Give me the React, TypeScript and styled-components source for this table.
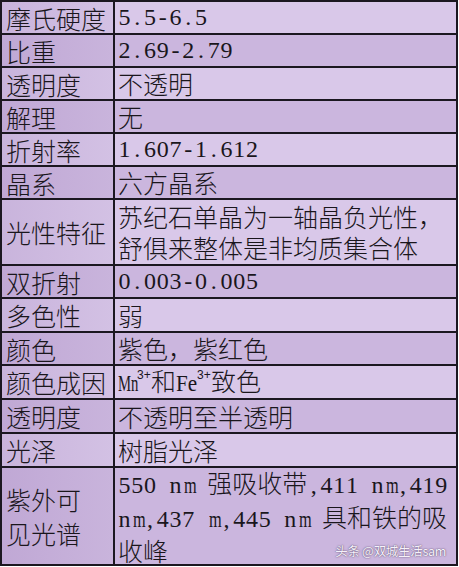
import React from "react";
import styled, { createGlobalStyle } from "styled-components";

const Global = createGlobalStyle`
  html, body { margin: 0; padding: 0; background: #ffffff; }
  body { font-family: "Noto Sans CJK SC", "Noto Sans", sans-serif; }
`;

const Table = styled.div`
  position: relative;
  width: 458px;
  box-sizing: border-box;
  display: grid;
  grid-template-columns: 111px 1fr;
  grid-template-rows: 31px 31px 31px 31px 31px 31px 64px 31px 32px 31px 32px 32px 32px 96px;
  gap: 2px;
  padding: 2px;
  background: #1b1720;
  color: #1a161c;
`;

type Tone = "light" | "dark";

const Label = styled.div<{ $tone: Tone }>`
  display: flex;
  align-items: center;
  padding-left: 4px;
  background: ${(p) =>
    p.$tone === "light"
      ? "linear-gradient(90deg, #c9b4dc, #d3c1e4)"
      : "linear-gradient(90deg, #c0a8d5, #c9b4dc)"};
  font-size: 25px;
  font-weight: 300;
  line-height: 34px;
  white-space: nowrap;
`;

const Value = styled.div<{ $tone: Tone }>`
  position: relative;
  display: flex;
  align-items: center;
  padding-left: 3px;
  background: ${(p) => (p.$tone === "light" ? "#d9c8e9" : "#cbb6de")};
  font-size: 25px;
  font-weight: 300;
  line-height: 31px;
  white-space: nowrap;
`;

const Lines = styled.div`
  display: block;
`;

const Half = styled.span<{ $squeeze?: number }>`
  display: inline-block;
  width: 12.75px;
  text-align: center;
  font-family: "Liberation Serif", "Times New Roman", serif;
  font-weight: 400;
  font-size: 24px;
  transform: ${(p) => (p.$squeeze ? `scaleX(${p.$squeeze})` : "none")};
`;

const Narrow = styled.span<{ $w: number; $scale: number }>`
  display: inline-block;
  width: ${(p) => p.$w}px;
  font-family: "Liberation Serif", "Times New Roman", serif;
  font-weight: 400;
  font-size: 23px;
  white-space: nowrap;
  transform: scaleX(${(p) => p.$scale});
  transform-origin: left center;
`;

const Sup = styled.span`
  display: inline-block;
  font-family: "Liberation Sans", Arial, sans-serif;
  font-weight: 400;
  font-size: 12px;
  line-height: 12px;
  vertical-align: 12px;
  width: 14px;
  text-align: left;
  white-space: nowrap;
`;

const Watermark = styled.div`
  position: absolute;
  right: 10px;
  bottom: 6px;
  font-family: "Noto Sans CJK SC", sans-serif;
  font-size: 12.5px;
  font-weight: 400;
  line-height: 14px;
  color: #f6f1fb;
  text-shadow: 0 0 1px #5e4e6e, 0 0 2px #7d6c8e;
  letter-spacing: -0.3px;
`;

const WIDE: Record<string, number> = { m: 0.68, M: 0.6, w: 0.7, W: 0.6 };

function Mixed({ text }: { text: string }) {
  const parts: React.ReactNode[] = [];
  let buf = "";
  const flush = (k: number) => {
    if (buf) {
      parts.push(<span key={"c" + k}>{buf}</span>);
      buf = "";
    }
  };
  Array.from(text).forEach((ch, i) => {
    if (ch.charCodeAt(0) < 128) {
      flush(i);
      parts.push(
        <Half key={i} $squeeze={WIDE[ch]}>
          {ch === " " ? "\u00a0" : ch}
        </Half>
      );
    } else {
      buf += ch;
    }
  });
  flush(text.length);
  return <>{parts}</>;
}

type Row = { label: string[]; value: React.ReactNode; tone: Tone; wm?: boolean };

const rows: Row[] = [
  { label: ["摩氏硬度"], value: <Mixed text="5.5-6.5" />, tone: "light" },
  { label: ["比重"], value: <Mixed text="2.69-2.79" />, tone: "dark" },
  { label: ["透明度"], value: <Mixed text="不透明" />, tone: "light" },
  { label: ["解理"], value: <Mixed text="无" />, tone: "dark" },
  { label: ["折射率"], value: <Mixed text="1.607-1.612" />, tone: "light" },
  { label: ["晶系"], value: <Mixed text="六方晶系" />, tone: "dark" },
  {
    label: ["光性特征"],
    value: (
      <Lines>
        <Mixed text="苏纪石单晶为一轴晶负光性，" />
        <br />
        <Mixed text="舒俱来整体是非均质集合体" />
      </Lines>
    ),
    tone: "light",
  },
  { label: ["双折射"], value: <Mixed text="0.003-0.005" />, tone: "dark" },
  { label: ["多色性"], value: <Mixed text="弱" />, tone: "light" },
  { label: ["颜色"], value: <Mixed text="紫色，紫红色" />, tone: "dark" },
  {
    label: ["颜色成因"],
    value: (
      <span>
        <Narrow $w={19} $scale={0.64}>Mn</Narrow>
        <Sup>3+</Sup>
        <span>和</span>
        <Narrow $w={21} $scale={0.92}>Fe</Narrow>
        <Sup>3+</Sup>
        <span>致色</span>
      </span>
    ),
    tone: "light",
  },
  { label: ["透明度"], value: <Mixed text="不透明至半透明" />, tone: "dark" },
  { label: ["光泽"], value: <Mixed text="树脂光泽" />, tone: "light" },
  {
    label: ["紫外可", "见光谱"],
    value: (
      <Lines>
        <Mixed text="550 nm 强吸收带,411 nm,419" />
        <br />
        <Mixed text="nm,437 m,445 nm 具和铁的吸" />
        <br />
        <Mixed text="收峰" />
      </Lines>
    ),
    tone: "dark",
    wm: true,
  },
];

export default function App() {
  return (
    <>
      <Global />
      <Table>
        {rows.map((r, i) => (
          <React.Fragment key={i}>
            <Label $tone={r.tone}>
              <Lines>
                {r.label.map((l, j) => (
                  <React.Fragment key={j}>
                    {j > 0 && <br />}
                    {l}
                  </React.Fragment>
                ))}
              </Lines>
            </Label>
            <Value $tone={r.tone}>
              {r.value}
              {r.wm && <Watermark>头条 @双城生活sam</Watermark>}
            </Value>
          </React.Fragment>
        ))}
      </Table>
    </>
  );
}
